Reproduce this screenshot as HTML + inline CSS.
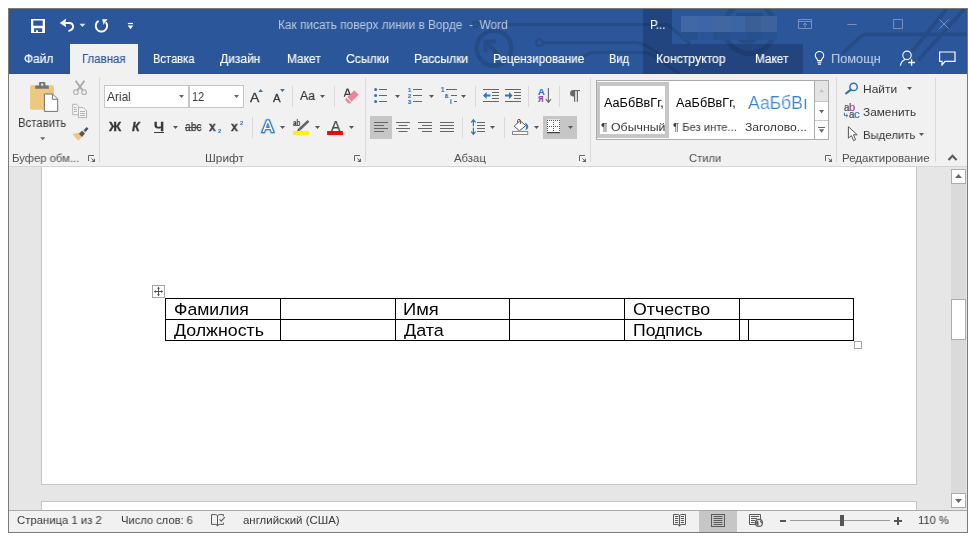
<!DOCTYPE html>
<html><head><meta charset="utf-8"><title>Word</title>
<style>
html,body{margin:0;padding:0;background:#fff;}
body{width:968px;height:541px;position:relative;overflow:hidden;font-family:"Liberation Sans",sans-serif;}
.a{position:absolute;display:block;}
.t{position:absolute;white-space:nowrap;transform-origin:0 0;line-height:normal;will-change:transform;}
</style></head><body>
<div class="a" style="left:8px;top:8px;width:960px;height:525px;background:#7A7A7A;"></div><div class="a" style="left:9px;top:9px;width:958px;height:523px;background:#F1F1F1;"></div><div class="a" style="left:9px;top:9px;width:958px;height:65px;background:#2B579A;"></div><div class="a" style="left:643px;top:9px;width:29px;height:35px;background:#224580;"></div><div class="a" style="left:643px;top:44px;width:160px;height:30px;background:#224580;"></div><svg class="a" style="left:9px;top:9px" width="958" height="65" viewBox="9 9 958 65"><g fill="none" stroke="#000" stroke-width="3.2" opacity="0.12"><circle cx="475.5" cy="24.5" r="2.6" stroke-width="2.4"/><path d="M478.5 24.5H643"/><circle cx="494" cy="48.3" r="17.4" stroke-width="4.4"/><path d="M501 57.5L486 42M485.5 52V41.5H496" stroke-width="4.2"/><circle cx="539.5" cy="42.7" r="3.4" stroke-width="2.4"/><path d="M543.5 42.7H634Q642 42.7 648 47L672 62"/><path d="M582 58Q588 52.4 596 52.4H640Q648 52.4 654 56L680 74"/><path d="M643 24.5H668L690 44"/><circle cx="749.5" cy="28" r="25.5" stroke-width="5"/><circle cx="747" cy="29" r="13" stroke-width="4"/><path d="M736 14.5H763" stroke-width="3"/><path d="M946.5 9L912.5 51" stroke-width="3.8"/><path d="M964.5 9L918.5 60" stroke-width="3.8"/><path d="M967 34.4H866Q862.8 34.4 860.5 36.7L842 54" stroke-width="3.6"/></g></svg><div class="a" style="left:70px;top:44px;width:68px;height:30px;background:#F1F1F1;"></div><div class="a" style="left:681px;top:16px;width:16px;height:16px;background:#4068A5;"></div><div class="a" style="left:681px;top:32px;width:16px;height:8px;background:#27508F;"></div><div class="a" style="left:697px;top:16px;width:16px;height:16px;background:#3C66A5;"></div><div class="a" style="left:697px;top:32px;width:16px;height:8px;background:#2A5699;"></div><div class="a" style="left:713px;top:16px;width:16px;height:16px;background:#4266A0;"></div><div class="a" style="left:713px;top:32px;width:16px;height:8px;background:#27508F;"></div><div class="a" style="left:729px;top:16px;width:16px;height:16px;background:#3C65A3;"></div><div class="a" style="left:729px;top:32px;width:16px;height:8px;background:#285293;"></div><div class="a" style="left:745px;top:16px;width:16px;height:16px;background:#3C5E96;"></div><div class="a" style="left:745px;top:32px;width:16px;height:8px;background:#27508F;"></div><div class="a" style="left:761px;top:16px;width:16px;height:16px;background:#3E639C;"></div><div class="a" style="left:761px;top:32px;width:16px;height:8px;background:#285293;"></div><span class="t" style="left:650.06px;top:18px;font-size:12.5px;color:#fff;transform:scaleX(0.9427);">Р...</span><span class="t" style="left:278.35px;top:18px;font-size:12.5px;color:#BCC9E2;transform:scaleX(0.9494);">Как писать поверх линии в Ворде&nbsp; -&nbsp; Word</span><span class="t" style="left:23.93px;top:52px;font-size:12.5px;color:#fff;transform:scaleX(0.9543);-webkit-text-stroke:0.15px #fff;">Файл</span><span class="t" style="left:81.88px;top:52px;font-size:12.5px;color:#2B579A;transform:scaleX(0.9191);-webkit-text-stroke:0.15px #2B579A;">Главная</span><span class="t" style="left:152.61px;top:52px;font-size:12.5px;color:#fff;transform:scaleX(0.8943);-webkit-text-stroke:0.15px #fff;">Вставка</span><span class="t" style="left:219.80px;top:52px;font-size:12.5px;color:#fff;transform:scaleX(0.9608);-webkit-text-stroke:0.15px #fff;">Дизайн</span><span class="t" style="left:286.65px;top:52px;font-size:12.5px;color:#fff;transform:scaleX(0.9518);-webkit-text-stroke:0.15px #fff;">Макет</span><span class="t" style="left:345.61px;top:52px;font-size:12.5px;color:#fff;transform:scaleX(0.9760);-webkit-text-stroke:0.15px #fff;">Ссылки</span><span class="t" style="left:413.53px;top:52px;font-size:12.5px;color:#fff;transform:scaleX(0.9665);-webkit-text-stroke:0.15px #fff;">Рассылки</span><span class="t" style="left:493.25px;top:52px;font-size:12.5px;color:#fff;transform:scaleX(0.9466);-webkit-text-stroke:0.15px #fff;">Рецензирование</span><span class="t" style="left:608.91px;top:52px;font-size:12.5px;color:#fff;transform:scaleX(0.8870);-webkit-text-stroke:0.15px #fff;">Вид</span><span class="t" style="left:656.42px;top:52px;font-size:12.5px;color:#fff;transform:scaleX(0.9768);-webkit-text-stroke:0.15px #fff;">Конструктор</span><span class="t" style="left:754.86px;top:52px;font-size:12.5px;color:#fff;transform:scaleX(0.9430);-webkit-text-stroke:0.15px #fff;">Макет</span><span class="t" style="left:830.58px;top:52px;font-size:12.5px;color:#B4C5E2;transform:scaleX(1.0221);-webkit-text-stroke:0.15px #B4C5E2;">Помощн</span><svg class="a" style="left:30px;top:18px" width="16" height="16" viewBox="0 0 16 16"><path d="M1 1H15V15H1Z M3.3 2.6V7.8H12.7V2.6Z M4.1 10.2V13.9H6V12.2H8V13.9H12.2V10.2Z" fill="#fff" fill-rule="evenodd"/></svg><svg class="a" style="left:59px;top:17px" width="17" height="16" viewBox="0 0 17 16"><path d="M5 5.9H10C13.2 5.9 14.1 8 14.1 9.6C14.1 11.6 12.6 13.3 9.4 14.1" fill="none" stroke="#fff" stroke-width="2"/><path d="M0.7 5.9L7.2 1.6L6.3 5.9L7.2 10.2Z" fill="#fff"/></svg><svg class="a" style="left:79px;top:23px" width="7" height="4" viewBox="0 0 7 4"><path d="M0.6 0.8H6.3L3.45 4Z" fill="#E3E9F4"/></svg><svg class="a" style="left:94px;top:17px" width="16" height="16" viewBox="0 0 16 16"><path d="M4.6 3.9A5.7 5.7 0 1 0 11.8 5.2" fill="none" stroke="#fff" stroke-width="1.9"/><path d="M8.1 2.2H13.7L10.9 5.2L9.7 7.9Z" fill="#fff"/></svg><svg class="a" style="left:127px;top:22px" width="7" height="8" viewBox="0 0 7 8"><path d="M0.9 1.5H6" stroke="#fff" stroke-width="1.2"/><path d="M0.7 3.5H6.2L3.45 7.2Z" fill="#fff"/></svg><svg class="a" style="left:798px;top:19px" width="15" height="11" viewBox="0 0 15 11"><path d="M0.5 0.5H13.5V9.5H0.5Z M0.5 2.5H13.5" fill="none" stroke="#7690BF" stroke-width="1"/><path d="M7 8.5V4M5 6L7 4L9 6" fill="none" stroke="#7690BF" stroke-width="1"/></svg><svg class="a" style="left:847px;top:24px" width="10" height="1" viewBox="0 0 10 1"><rect x="0.3" y="0" width="9.4" height="1" fill="#7690BF"/></svg><svg class="a" style="left:893px;top:19px" width="11" height="11" viewBox="0 0 11 11"><path d="M0.5 0.5H9.5V9.5H0.5Z" fill="none" stroke="#7690BF" stroke-width="1"/></svg><svg class="a" style="left:939px;top:19px" width="11" height="11" viewBox="0 0 11 11"><path d="M0.3 0.3L9.7 9.7M9.7 0.3L0.3 9.7" fill="none" stroke="#7690BF" stroke-width="1"/></svg><svg class="a" style="left:814px;top:51px" width="12" height="15" viewBox="0 0 12 15"><path d="M3.6 9.6C3.6 7.8 1.3 7 1.3 4.7A4.2 4.2 0 0 1 9.7 4.7C9.7 7 7.4 7.8 7.4 9.6Z" fill="none" stroke="#fff" stroke-width="1.1"/><path d="M3.6 11.3H7.4M3.9 13.1H7.1" stroke="#fff" stroke-width="1.1"/></svg><svg class="a" style="left:899px;top:49px" width="17" height="18" viewBox="0 0 17 18"><circle cx="8" cy="6.3" r="4.2" fill="none" stroke="#fff" stroke-width="1.1"/><path d="M1.4 16.8C1.8 13.6 3.6 11.4 6.2 10.4" fill="none" stroke="#fff" stroke-width="1.1"/><path d="M12.6 10.2V16.8M9.3 13.5H15.9" stroke="#fff" stroke-width="1.3"/></svg><svg class="a" style="left:938px;top:50px" width="18" height="16" viewBox="0 0 18 16"><path d="M1.6 2H17V11.4H7L4 15V11.4H1.6Z" fill="none" stroke="#fff" stroke-width="1.2"/></svg><div class="a" style="left:9px;top:166px;width:958px;height:1px;background:#D5D5D5;"></div><div class="a" style="left:99px;top:78px;width:1px;height:84px;background:#D8D8D8;"></div><div class="a" style="left:365px;top:78px;width:1px;height:84px;background:#D8D8D8;"></div><div class="a" style="left:590px;top:78px;width:1px;height:84px;background:#D8D8D8;"></div><div class="a" style="left:836px;top:78px;width:1px;height:84px;background:#D8D8D8;"></div><div class="a" style="left:935px;top:78px;width:1px;height:84px;background:#D8D8D8;"></div><div class="a" style="left:292px;top:86px;width:1px;height:21px;background:#DADADA;"></div><div class="a" style="left:334px;top:86px;width:1px;height:21px;background:#DADADA;"></div><div class="a" style="left:475px;top:86px;width:1px;height:21px;background:#DADADA;"></div><div class="a" style="left:528px;top:86px;width:1px;height:21px;background:#DADADA;"></div><div class="a" style="left:559px;top:86px;width:1px;height:21px;background:#DADADA;"></div><div class="a" style="left:252px;top:117px;width:1px;height:21px;background:#DADADA;"></div><div class="a" style="left:462px;top:117px;width:1px;height:21px;background:#DADADA;"></div><div class="a" style="left:504px;top:117px;width:1px;height:21px;background:#DADADA;"></div><svg class="a" style="left:88px;top:155px;" width="8" height="8" viewBox="0 0 8 8"><path d="M0.5 6V0.5H6" fill="none" stroke="#666" stroke-width="1"/><path d="M3.2 7H7V3.2Z" fill="#666"/><path d="M3.4 3.4L6 6" stroke="#666" stroke-width="1"/></svg><svg class="a" style="left:354px;top:155px;" width="8" height="8" viewBox="0 0 8 8"><path d="M0.5 6V0.5H6" fill="none" stroke="#666" stroke-width="1"/><path d="M3.2 7H7V3.2Z" fill="#666"/><path d="M3.4 3.4L6 6" stroke="#666" stroke-width="1"/></svg><svg class="a" style="left:579px;top:155px;" width="8" height="8" viewBox="0 0 8 8"><path d="M0.5 6V0.5H6" fill="none" stroke="#666" stroke-width="1"/><path d="M3.2 7H7V3.2Z" fill="#666"/><path d="M3.4 3.4L6 6" stroke="#666" stroke-width="1"/></svg><svg class="a" style="left:825px;top:155px;" width="8" height="8" viewBox="0 0 8 8"><path d="M0.5 6V0.5H6" fill="none" stroke="#666" stroke-width="1"/><path d="M3.2 7H7V3.2Z" fill="#666"/><path d="M3.4 3.4L6 6" stroke="#666" stroke-width="1"/></svg><svg class="a" style="left:947px;top:154px;" width="11" height="8" viewBox="0 0 11 8"><path d="M1.5 6L5.5 1.8L9.5 6" fill="none" stroke="#5A5A5A" stroke-width="2.1"/></svg><span class="t" style="left:17.68px;top:116px;font-size:12.3px;color:#383838;transform:scaleX(0.9245);">Вставить</span><span class="t" style="left:11.81px;top:152px;font-size:11.4px;color:#505050;transform:scaleX(0.9906);">Буфер обм...</span><span class="t" style="left:204.87px;top:152px;font-size:11.4px;color:#505050;transform:scaleX(1.0360);">Шрифт</span><span class="t" style="left:454.10px;top:152px;font-size:11.4px;color:#505050;transform:scaleX(0.9953);">Абзац</span><span class="t" style="left:689.01px;top:152px;font-size:11.4px;color:#505050;transform:scaleX(0.9818);">Стили</span><span class="t" style="left:841.89px;top:152px;font-size:11.4px;color:#505050;transform:scaleX(1.0105);">Редактирование</span><div class="a" style="left:104px;top:85px;width:85px;height:23px;background:#fff;border:1px solid #C6C6C6;box-sizing:border-box;"></div><div class="a" style="left:189px;top:85px;width:55px;height:23px;background:#fff;border:1px solid #C6C6C6;box-sizing:border-box;"></div><span class="t" style="left:107.40px;top:90px;font-size:12px;color:#383838;transform:scaleX(0.9897);">Arial</span><span class="t" style="left:192.39px;top:90px;font-size:12px;color:#383838;transform:scaleX(0.9011);">12</span><svg class="a" style="left:179px;top:95px;" width="5" height="3" viewBox="0 0 5 3"><path d="M0 0H5L2.5 3Z" fill="#666"/></svg><svg class="a" style="left:234px;top:95px;" width="5" height="3" viewBox="0 0 5 3"><path d="M0 0H5L2.5 3Z" fill="#666"/></svg><span class="t" style="left:108.81px;top:120px;font-size:12.3px;color:#383838;transform:scaleX(1.0973);font-weight:bold;-webkit-text-stroke:0.3px #383838;">Ж</span><span class="t" style="left:131.80px;top:120px;font-size:12.3px;color:#383838;transform:scaleX(1.0247);font-weight:bold;font-style:italic;-webkit-text-stroke:0.3px #383838;">К</span><span class="t" style="left:154.10px;top:120px;font-size:12.3px;color:#383838;transform:scaleX(1.1644);font-weight:bold;-webkit-text-stroke:0.3px #383838;">Ч</span><div class="a" style="left:154px;top:132px;width:10px;height:1px;background:#383838;"></div><svg class="a" style="left:173px;top:126px;" width="5" height="3" viewBox="0 0 5 3"><path d="M0 0H5L2.5 3Z" fill="#585858"/></svg><span class="t" style="left:184.57px;top:120px;font-size:12px;color:#383838;transform:scaleX(0.8626);-webkit-text-stroke:0.25px #383838;">abc</span><div class="a" style="left:185px;top:127px;width:16px;height:1px;background:#4A4A4A;"></div><span class="t" style="left:209.00px;top:119px;font-size:13.5px;color:#383838;transform:scaleX(0.8933);font-weight:bold;-webkit-text-stroke:0.3px #383838;">x</span><span class="t" style="left:217.90px;top:128px;font-size:6px;color:#2E75B6;transform:scaleX(1.0000);font-weight:bold;">2</span><span class="t" style="left:231.20px;top:119px;font-size:13.5px;color:#383838;transform:scaleX(0.9067);font-weight:bold;-webkit-text-stroke:0.3px #383838;">x</span><span class="t" style="left:240.11px;top:120px;font-size:6px;color:#2E75B6;transform:scaleX(0.9655);font-weight:bold;">2</span><span class="t" style="left:250.20px;top:90px;font-size:13.5px;color:#383838;transform:scaleX(1.0333);-webkit-text-stroke:0.3px #383838;">A</span><span class="t" style="left:273.10px;top:92px;font-size:10.7px;color:#383838;transform:scaleX(1.0694);-webkit-text-stroke:0.3px #383838;">A</span><svg class="a" style="left:258px;top:89px;" width="6" height="3" viewBox="0 0 6 3"><path d="M0.3 3H5L2.65 0Z" fill="#2E75B6"/></svg><svg class="a" style="left:280px;top:89px;" width="6" height="3" viewBox="0 0 6 3"><path d="M0 0H4.9L2.45 3Z" fill="#2E75B6"/></svg><span class="t" style="left:300.40px;top:89px;font-size:12.3px;color:#383838;transform:scaleX(0.9865);-webkit-text-stroke:0.2px #383838;">Aa</span><svg class="a" style="left:320px;top:95px;" width="5" height="3" viewBox="0 0 5 3"><path d="M0 0H5L2.5 3Z" fill="#585858"/></svg><svg class="a" style="left:280px;top:126px;" width="5" height="3" viewBox="0 0 5 3"><path d="M0 0H5L2.5 3Z" fill="#585858"/></svg><svg class="a" style="left:315px;top:126px;" width="5" height="3" viewBox="0 0 5 3"><path d="M0 0H5L2.5 3Z" fill="#585858"/></svg><svg class="a" style="left:349px;top:126px;" width="5" height="3" viewBox="0 0 5 3"><path d="M0 0H5L2.5 3Z" fill="#585858"/></svg><div class="a" style="left:370px;top:116px;width:22px;height:23px;background:#C6C6C6;"></div><div class="a" style="left:543px;top:116px;width:34px;height:23px;background:#C6C6C6;"></div><svg class="a" style="left:29px;top:81px" width="31" height="32" viewBox="0 0 31 32"><rect x="1.1" y="4.3" width="23.8" height="24.4" rx="1.6" fill="#EDC87E"/><path d="M6.8 4.5H19.2Q19.8 4.5 19.8 5.1V7.7H6.2V5.1Q6.2 4.5 6.8 4.5Z M10 4.8V2.2Q10 1.1 11.1 1.1H15.3Q16.4 1.1 16.4 2.2V4.8Z" fill="#737373"/><rect x="12.1" y="2.5" width="2.2" height="2.2" fill="#E9E9E9"/><path d="M15.4 13H23.6L28.7 18.1V30.4H15.4Z" fill="#fff" stroke="#737373" stroke-width="1"/><path d="M23.4 13.2V18.3H28.5" fill="none" stroke="#737373" stroke-width="1"/></svg><svg class="a" style="left:40px;top:137px" width="6" height="4" viewBox="0 0 6 4"><path d="M0.2 0.3H5.2L2.7 3.2Z" fill="#666"/></svg><svg class="a" style="left:72px;top:80px" width="16" height="16" viewBox="0 0 16 16"><path d="M3.6 0.8L10.6 10.4M12.4 0.8L5.4 10.4" stroke="#A8A8A8" stroke-width="1.8" fill="none"/><circle cx="3.9" cy="12.2" r="2.3" fill="none" stroke="#B3B3B3" stroke-width="1.2"/><circle cx="12.1" cy="12.2" r="2.3" fill="none" stroke="#B3B3B3" stroke-width="1.2"/></svg><svg class="a" style="left:71px;top:103px" width="17" height="16" viewBox="0 0 17 16"><path d="M1.7 1.3H5.6L8 3.7V11.7H1.7Z" fill="#F6F6F6" stroke="#B5AFB5" stroke-width="1"/><path d="M7.4 4.6H12.4L15.6 7.8V14.6H7.4Z" fill="#F6F6F6" stroke="#B5AFB5" stroke-width="1"/><path d="M3 4.5H5.5M3 6.5H6M3 8.5H6M9 8.5H14M9 10.5H14M9 12.5H14" stroke="#B5AFB5" stroke-width="1"/></svg><svg class="a" style="left:71px;top:125px" width="19" height="17" viewBox="0 0 19 17"><path d="M1.4 8.9L8.2 7.6L11.4 11.6L7.3 15.7Z" fill="#EDC87E"/><path d="M11.1 5.8L13.9 8.6L11.1 11.9L7.9 8.7Z" fill="#555"/><path d="M12.2 5.4L14.3 7.5" stroke="#9A9A9A" stroke-width="0.9"/><path d="M15.7 1.9L17.5 3.7L14.5 6.9L12.7 5.1Z" fill="#555"/></svg><svg class="a" style="left:343px;top:88px" width="17" height="17" viewBox="0 0 17 17"><path d="M1.3 8.7L4.1 1.3H4.9L7.4 7.6M2.3 6.3H6.6" fill="none" stroke="#3E3E3E" stroke-width="1.35"/><path d="M11.3 2.7L15.3 6.7L8.6 13.2L4.8 9.1Z" fill="#E9859B" stroke="#E9859B" stroke-width="0.8" stroke-linejoin="round"/><path d="M3.4 10.2L7.9 14.5L5.8 15.6L2.4 11.9Z" fill="#E9859B" stroke="#E9859B" stroke-width="0.5" stroke-linejoin="round"/></svg><svg class="a" style="left:259px;top:117px" width="18" height="18" viewBox="0 0 18 18"><path d="M7.5 2.9H10.3L15.2 15.5H12.3L11.2 12.6H6.6L5.5 15.5H2.6Z M7.6 10.3H10.2L8.9 6.6Z" fill="none" stroke="#A9C8EC" stroke-width="3" stroke-linejoin="round" opacity="0.55"/><path d="M7.5 2.9H10.3L15.2 15.5H12.3L11.2 12.6H6.6L5.5 15.5H2.6Z M7.6 10.3H10.2L8.9 6.6Z" fill="#fff" stroke="#3E7FC6" stroke-width="1.25" stroke-linejoin="round" fill-rule="evenodd"/></svg><span class="t" style="left:292.6px;top:118px;font-size:8.5px;color:#3C3C3C;font-weight:bold;-webkit-text-stroke:0.2px #3C3C3C;transform:scaleX(0.72)">ab</span><svg class="a" style="left:292px;top:118px" width="18" height="18" viewBox="0 0 18 18"><path d="M15.6 1.9L17.4 3.7L8.3 12.4L6.4 10.6Z" fill="#666"/><path d="M6.4 10.6L8.3 12.4L5 13.2Z" fill="#444"/><rect x="1" y="12.9" width="16.1" height="4" fill="#FFF200"/></svg><span class="t" style="left:330.7px;top:118px;font-size:14.2px;color:#4A4A4A;-webkit-text-stroke:0.25px #4A4A4A;transform:scaleX(0.98)">A</span><svg class="a" style="left:327px;top:131px" width="16" height="4" viewBox="0 0 16 4"><rect x="0.1" y="0" width="15.8" height="4" fill="#F00"/></svg><svg class="a" style="left:366px;top:80px" width="230" height="62" viewBox="366 80 230 62"><circle cx="375.6" cy="89.5" r="1.5" fill="#2E75B6"/><rect x="379" y="89" width="8" height="1" fill="#666"/><circle cx="375.6" cy="95.5" r="1.5" fill="#2E75B6"/><rect x="379" y="95" width="8" height="1" fill="#666"/><circle cx="375.6" cy="101.5" r="1.5" fill="#2E75B6"/><rect x="379" y="101" width="8" height="1" fill="#666"/><rect x="413" y="89" width="9" height="1" fill="#666"/><rect x="413" y="95" width="9" height="1" fill="#666"/><rect x="413" y="101" width="9" height="1" fill="#666"/><rect x="446" y="89" width="11" height="1" fill="#666"/><rect x="451" y="95" width="6" height="1" fill="#666"/><rect x="454" y="101" width="3" height="1" fill="#666"/><rect x="483" y="89" width="16" height="1" fill="#666"/><rect x="483" y="101" width="16" height="1" fill="#666"/><rect x="492" y="92" width="7" height="1" fill="#666"/><rect x="492" y="95" width="7" height="1" fill="#666"/><rect x="492" y="98" width="7" height="1" fill="#666"/><rect x="505" y="89" width="16" height="1" fill="#666"/><rect x="505" y="101" width="16" height="1" fill="#666"/><rect x="514" y="92" width="7" height="1" fill="#666"/><rect x="514" y="95" width="7" height="1" fill="#666"/><rect x="514" y="98" width="7" height="1" fill="#666"/><path d="M483 95.5L486.6 92V94.5H490.4V96.5H486.6V99Z" fill="#2E75B6"/><path d="M512.6 95.5L509 92V94.5H505V96.5H509V99Z" fill="#2E75B6"/><path d="M548.4 88V102M545.8 99.2L548.4 102.4L551 99.2" fill="none" stroke="#666" stroke-width="1.1"/><path d="M574.6 90H573.4A3.3 3.3 0 0 0 573.4 96.6H574.6Z" fill="#666"/><rect x="574" y="90" width="1.2" height="11.8" fill="#666"/><rect x="576.8" y="90" width="1.2" height="11.8" fill="#666"/><rect x="573.4" y="90" width="6.6" height="1.1" fill="#666"/><rect x="374" y="122" width="14" height="1" fill="#666"/><rect x="374" y="125" width="10" height="1" fill="#666"/><rect x="374" y="128" width="14" height="1" fill="#666"/><rect x="374" y="131" width="10" height="1" fill="#666"/><rect x="396" y="122" width="14" height="1" fill="#666"/><rect x="398.5" y="125" width="9.0" height="1" fill="#666"/><rect x="396" y="128" width="14" height="1" fill="#666"/><rect x="398.5" y="131" width="9.0" height="1" fill="#666"/><rect x="418" y="122" width="14" height="1" fill="#666"/><rect x="422" y="125" width="10" height="1" fill="#666"/><rect x="418" y="128" width="14" height="1" fill="#666"/><rect x="422" y="131" width="10" height="1" fill="#666"/><rect x="440" y="122" width="14" height="1" fill="#666"/><rect x="440" y="125" width="14" height="1" fill="#666"/><rect x="440" y="128" width="14" height="1" fill="#666"/><rect x="440" y="131" width="14" height="1" fill="#666"/><rect x="477" y="122" width="8" height="1" fill="#666"/><rect x="477" y="125" width="8" height="1" fill="#666"/><rect x="477" y="128" width="8" height="1" fill="#666"/><rect x="477" y="131" width="8" height="1" fill="#666"/><path d="M473.4 119.6V126.2M473.4 127.8V134.4M471.2 122.3L473.4 119.6L475.6 122.3M471.2 131.7L473.4 134.4L475.6 131.7" fill="none" stroke="#2E75B6" stroke-width="1.2"/><path d="M520 120.7L525.8 125.6L519.4 130.8L514.2 126.2Z" fill="#fff" stroke="#555" stroke-width="1"/><path d="M517.6 122.6V120.6Q517.6 119.4 519 119.4Q520.4 119.4 520.4 120.6V124" fill="none" stroke="#555" stroke-width="1"/><path d="M524.8 122.6Q528.6 124.6 528.2 127.6Q527.6 129.6 525.2 130.2Q526.6 127.6 526.2 125.6Z" fill="#2E75B6"/><rect x="512.5" y="131.5" width="15.2" height="3" fill="#fff" stroke="#8A8A8A" stroke-width="1"/><rect x="547" y="119.5" width="13" height="12.5" fill="#fff"/><path d="M547.5 120V132M553.5 120V132M559.5 120V132M547 120.5H560M547 126.5H560" stroke="#555" stroke-width="1" stroke-dasharray="1 1" fill="none"/><rect x="547" y="132" width="13" height="1.2" fill="#444"/></svg><span class="t" style="left:407.9px;top:86.09px;font-size:6.2px;color:#2E75B6;font-weight:bold;-webkit-text-stroke:0.2px #2E75B6;transform:scaleX(0.9)">1</span><span class="t" style="left:407.9px;top:92.09px;font-size:6.2px;color:#2E75B6;font-weight:bold;-webkit-text-stroke:0.2px #2E75B6;transform:scaleX(0.9)">2</span><span class="t" style="left:407.9px;top:98.09px;font-size:6.2px;color:#2E75B6;font-weight:bold;-webkit-text-stroke:0.2px #2E75B6;transform:scaleX(0.9)">3</span><span class="t" style="left:441px;top:86.12px;font-size:6.5px;color:#2E75B6;font-weight:bold;-webkit-text-stroke:0.2px #2E75B6;transform:scaleX(0.9)">1</span><span class="t" style="left:445px;top:92.12px;font-size:6.5px;color:#2E75B6;font-weight:bold;-webkit-text-stroke:0.2px #2E75B6;transform:scaleX(0.85)">a</span><span class="t" style="left:450px;top:98.12px;font-size:6.5px;color:#2E75B6;font-weight:bold;-webkit-text-stroke:0.2px #2E75B6;transform:scaleX(0.9)">i</span><span class="t" style="left:537.6px;top:86.01px;font-size:9.6px;color:#2E75B6;font-weight:bold;-webkit-text-stroke:0.2px #2E75B6;transform:scaleX(0.98)">A</span><span class="t" style="left:537.6px;top:94.47px;font-size:9.2px;color:#8E44AD;font-weight:bold;-webkit-text-stroke:0.2px #8E44AD;transform:scaleX(0.86)">Я</span><svg class="a" style="left:844px;top:81px" width="16" height="14" viewBox="0 0 16 14"><circle cx="9.6" cy="5.9" r="3.7" fill="none" stroke="#2E75B6" stroke-width="1.5"/><path d="M6.9 8.7L2.1 12.4" stroke="#2E75B6" stroke-width="2.1" stroke-linecap="round"/></svg><span class="t" style="left:843.8px;top:101.55px;font-size:10px;color:#444;-webkit-text-stroke:0.2px #444;transform:scaleX(0.95)">a</span><span class="t" style="left:849px;top:101.55px;font-size:10px;color:#8E44AD;-webkit-text-stroke:0.2px #8E44AD;transform:scaleX(1.1)">b</span><span class="t" style="left:848.7px;top:108.55px;font-size:10px;color:#444;-webkit-text-stroke:0.2px #444;transform:scaleX(0.95)">a</span><span class="t" style="left:854.2px;top:108.55px;font-size:10px;color:#2E75B6;-webkit-text-stroke:0.2px #2E75B6;transform:scaleX(1.15)">c</span><svg class="a" style="left:843px;top:112px" width="6" height="6" viewBox="0 0 6 6"><path d="M1.4 0.8V3.6H4.6M3.2 2L4.8 3.6L3.2 5.2" fill="none" stroke="#2E75B6" stroke-width="1"/></svg><svg class="a" style="left:847px;top:125px" width="12" height="17" viewBox="0 0 12 17"><path d="M1.4 1.7V13.2L4.4 10.5L6.6 15.6L8.6 14.7L6.4 9.8H10.2Z" fill="#fff" stroke="#555" stroke-width="1" stroke-linejoin="round"/></svg><svg class="a" style="left:395px;top:95px;" width="5" height="3" viewBox="0 0 5 3"><path d="M0 0H5L2.5 3Z" fill="#585858"/></svg><svg class="a" style="left:429px;top:95px;" width="5" height="3" viewBox="0 0 5 3"><path d="M0 0H5L2.5 3Z" fill="#585858"/></svg><svg class="a" style="left:461px;top:95px;" width="5" height="3" viewBox="0 0 5 3"><path d="M0 0H5L2.5 3Z" fill="#585858"/></svg><svg class="a" style="left:490px;top:126px;" width="5" height="3" viewBox="0 0 5 3"><path d="M0 0H5L2.5 3Z" fill="#585858"/></svg><svg class="a" style="left:534px;top:126px;" width="5" height="3" viewBox="0 0 5 3"><path d="M0 0H5L2.5 3Z" fill="#585858"/></svg><svg class="a" style="left:568px;top:126px;" width="5" height="3" viewBox="0 0 5 3"><path d="M0 0H5L2.5 3Z" fill="#585858"/></svg><div class="a" style="left:596px;top:80px;width:233px;height:60px;background:#fff;border:1px solid #ABABAB;box-sizing:border-box;"></div><div class="a" style="left:597px;top:82px;width:72px;height:56px;background:#fff;border:solid #C6C6C6;border-width:4px 4px 4px 3px;box-sizing:border-box;"></div><span class="t" style="left:603.90px;top:96px;font-size:12.3px;color:#000;transform:scaleX(1.0283);">АаБбВвГг,</span><span class="t" style="left:675.50px;top:96px;font-size:12.3px;color:#000;transform:scaleX(1.0283);">АаБбВвГг,</span><span class="t" style="left:747.90px;top:93px;font-size:17.9px;color:#3480D2;transform:scaleX(0.9809);-webkit-text-stroke:0.22px #fff;">АаБбВı</span><span class="t" style="left:600.88px;top:120px;font-size:11.6px;color:#383838;transform:scaleX(1.0614);">¶ Обычный</span><span class="t" style="left:673.01px;top:120px;font-size:11.6px;color:#383838;transform:scaleX(0.9695);">¶ Без инте...</span><span class="t" style="left:745.49px;top:120px;font-size:11.6px;color:#383838;transform:scaleX(1.0483);">Заголово...</span><div class="a" style="left:814px;top:80px;width:15px;height:60px;background:#fff;border:1px solid #ABABAB;box-sizing:border-box;"></div><div class="a" style="left:815px;top:81px;width:13px;height:20px;background:#E4E4E4;"></div><div class="a" style="left:815px;top:101px;width:13px;height:1px;background:#C6C6C6;"></div><div class="a" style="left:815px;top:120px;width:13px;height:1px;background:#C6C6C6;"></div><svg class="a" style="left:819px;top:89px;" width="6" height="4" viewBox="0 0 6 4"><path d="M0 3.2H5.2L2.6 0Z" fill="#C4C4C4"/></svg><svg class="a" style="left:819px;top:110px;" width="6" height="4" viewBox="0 0 6 4"><path d="M0 0H5.2L2.6 3.2Z" fill="#666"/></svg><div class="a" style="left:818px;top:127px;width:7px;height:1px;background:#666;"></div><svg class="a" style="left:819px;top:129px;" width="6" height="4" viewBox="0 0 6 4"><path d="M0 0.3H5.2L2.6 3.7Z" fill="#666"/></svg><span class="t" style="left:862.89px;top:82px;font-size:11.8px;color:#383838;transform:scaleX(1.0131);">Найти</span><span class="t" style="left:862.90px;top:105px;font-size:11.8px;color:#383838;transform:scaleX(1.0023);">Заменить</span><span class="t" style="left:862.93px;top:128px;font-size:11.8px;color:#383838;transform:scaleX(0.9625);">Выделить</span><svg class="a" style="left:907px;top:87px;" width="5" height="3" viewBox="0 0 5 3"><path d="M0 0H5L2.5 3Z" fill="#585858"/></svg><svg class="a" style="left:919px;top:133px;" width="5" height="3" viewBox="0 0 5 3"><path d="M0 0H5L2.5 3Z" fill="#585858"/></svg><div class="a" style="left:9px;top:167px;width:958px;height:343px;background:#E6E6E6;"></div><div class="a" style="left:41px;top:167px;width:876px;height:318px;background:#fff;border:1px solid #C6C6C6;border-top:none;box-sizing:border-box;"></div><div class="a" style="left:41px;top:501px;width:876px;height:9px;background:#fff;border:1px solid #C6C6C6;border-bottom:none;box-sizing:border-box;"></div><div class="a" style="left:951px;top:169px;width:15px;height:339px;background:#DADADA;"></div><div class="a" style="left:951px;top:169px;width:15px;height:15px;background:#fff;border:1px solid #ABABAB;box-sizing:border-box;"></div><svg class="a" style="left:955px;top:174px;" width="7" height="4" viewBox="0 0 7 4"><path d="M0 4H7L3.5 0Z" fill="#666"/></svg><div class="a" style="left:951px;top:493px;width:15px;height:15px;background:#fff;border:1px solid #ABABAB;box-sizing:border-box;"></div><svg class="a" style="left:955px;top:499px;" width="7" height="4" viewBox="0 0 7 4"><path d="M0 0H7L3.5 4Z" fill="#666"/></svg><div class="a" style="left:951px;top:299px;width:15px;height:41px;background:#fff;border:1px solid #ABABAB;box-sizing:border-box;"></div><div class="a" style="left:165px;top:298px;width:689px;height:1px;background:#000;"></div><div class="a" style="left:165px;top:319px;width:689px;height:1px;background:#000;"></div><div class="a" style="left:165px;top:340px;width:689px;height:1px;background:#000;"></div><div class="a" style="left:165px;top:298px;width:1px;height:43px;background:#000;"></div><div class="a" style="left:280px;top:298px;width:1px;height:43px;background:#000;"></div><div class="a" style="left:395px;top:298px;width:1px;height:43px;background:#000;"></div><div class="a" style="left:509px;top:298px;width:1px;height:43px;background:#000;"></div><div class="a" style="left:624px;top:298px;width:1px;height:43px;background:#000;"></div><div class="a" style="left:739px;top:298px;width:1px;height:43px;background:#000;"></div><div class="a" style="left:853px;top:298px;width:1px;height:43px;background:#000;"></div><div class="a" style="left:748px;top:320px;width:1px;height:20px;background:#000;"></div><span class="t" style="left:173.96px;top:300px;font-size:16.9px;color:#000;transform:scaleX(1.0429);">Фамилия</span><span class="t" style="left:403.49px;top:300px;font-size:16.9px;color:#000;transform:scaleX(1.0865);">Имя</span><span class="t" style="left:632.96px;top:300px;font-size:16.9px;color:#000;transform:scaleX(1.0491);">Отчество</span><span class="t" style="left:173.79px;top:321px;font-size:16.9px;color:#000;transform:scaleX(1.0524);">Должность</span><span class="t" style="left:403.79px;top:321px;font-size:16.9px;color:#000;transform:scaleX(1.0637);">Дата</span><span class="t" style="left:632.84px;top:321px;font-size:16.9px;color:#000;transform:scaleX(1.0434);">Подпись</span><div class="a" style="left:152px;top:285px;width:13px;height:13px;background:#fff;border:1px solid #A6A6A6;box-sizing:border-box;"></div><svg class="a" style="left:153px;top:286px;" width="11" height="11" viewBox="0 0 11 11"><path d="M5.5 1.6V9.4M1.6 5.5H9.4" stroke="#555" stroke-width="1" fill="none"/><path d="M5.5 0.8L7 2.8H4ZM5.5 10.2L7 8.2H4ZM0.8 5.5L2.8 4V7ZM10.2 5.5L8.2 4V7Z" fill="#555"/></svg><div class="a" style="left:854px;top:341px;width:8px;height:8px;background:#fff;border:1px solid #A6A6A6;box-sizing:border-box;"></div><div class="a" style="left:9px;top:510px;width:958px;height:22px;background:#F1F1F1;"></div><div class="a" style="left:9px;top:510px;width:958px;height:1px;background:#ABABAB;"></div><span class="t" style="left:17.20px;top:514px;font-size:11.4px;color:#383838;transform:scaleX(0.9928);">Страница 1 из 2</span><span class="t" style="left:120.82px;top:514px;font-size:11.4px;color:#383838;transform:scaleX(0.9784);">Число слов: 6</span><span class="t" style="left:243.20px;top:514px;font-size:11.4px;color:#383838;transform:scaleX(1.0031);">английский (США)</span><div class="a" style="left:699px;top:511px;width:38px;height:21px;background:#C6C6C6;"></div><div class="a" style="left:780px;top:520px;width:6px;height:2px;background:#555;"></div><div class="a" style="left:790px;top:520px;width:100px;height:1px;background:#9A9A9A;"></div><div class="a" style="left:840px;top:515px;width:4px;height:11px;background:#555;"></div><div class="a" style="left:894px;top:520px;width:8px;height:2px;background:#555;"></div><div class="a" style="left:897px;top:517px;width:2px;height:8px;background:#555;"></div><span class="t" style="left:917.61px;top:514px;font-size:11.4px;color:#383838;transform:scaleX(0.9821);">110 %</span><svg class="a" style="left:210px;top:513px" width="16" height="15" viewBox="0 0 16 15"><path d="M7.5 2.6V12.4M7.5 2.6L5.8 1.6H1.5V11.4H5.8L7.5 12.4L9.2 11.4H13.4V9.6M13.4 3.4V1.6H9.2L7.5 2.6" fill="none" stroke="#5A5A5A" stroke-width="1"/><path d="M6.2 12.2L7.5 13.6L8.8 12.2Z" fill="#5A5A5A"/><path d="M9.5 6.4L11.2 8.2L14.8 4.2" fill="none" stroke="#5A5A5A" stroke-width="1.1"/></svg><svg class="a" style="left:672px;top:513px" width="15" height="15" viewBox="0 0 15 15"><path d="M7.5 2V13M1.5 1.5H5.8L7.5 2.4L9.2 1.5H13.5V11.5H9.2L7.5 12.4L5.8 11.5H1.5Z" fill="none" stroke="#5A5A5A" stroke-width="1"/><path d="M3 3.5H6.2M3 5.5H6.2M3 7.5H6.2M3 9.5H6.2M8.8 3.5H12M8.8 5.5H12M8.8 7.5H12M8.8 9.5H12" stroke="#5A5A5A" stroke-width="1"/><path d="M6.3 12.4L7.5 13.8L8.7 12.4Z" fill="#5A5A5A"/></svg><svg class="a" style="left:711px;top:514px" width="15" height="13" viewBox="0 0 15 13"><rect x="0.5" y="0.5" width="13" height="12" fill="none" stroke="#5A5A5A" stroke-width="1"/><path d="M2.5 2.5H11.5M2.5 4.5H11.5M2.5 6.5H11.5M2.5 8.5H11.5M2.5 10.5H11.5" stroke="#5A5A5A" stroke-width="1"/></svg><svg class="a" style="left:748px;top:513px" width="16" height="15" viewBox="0 0 16 15"><path d="M8.5 11.5H1.5V1.5H12.5V6" fill="none" stroke="#5A5A5A" stroke-width="1"/><path d="M3 3.5H11M3 5.5H9M3 7.5H7M3 9.5H6.5" stroke="#5A5A5A" stroke-width="1"/><circle cx="10.9" cy="9.9" r="3.5" fill="#F1F1F1" stroke="#5A5A5A" stroke-width="1.2"/><path d="M8.2 8.4Q10 7.6 10.6 9Q10 10.4 10.8 11.4Q10.4 12.8 9.4 12.6Q7.6 11 8.2 8.4ZM12.4 7.2Q11.6 8.4 12.6 9.4Q13.8 9.8 14 11Q14.6 8.6 12.4 7.2Z" fill="#5A5A5A"/></svg>
</body></html>
